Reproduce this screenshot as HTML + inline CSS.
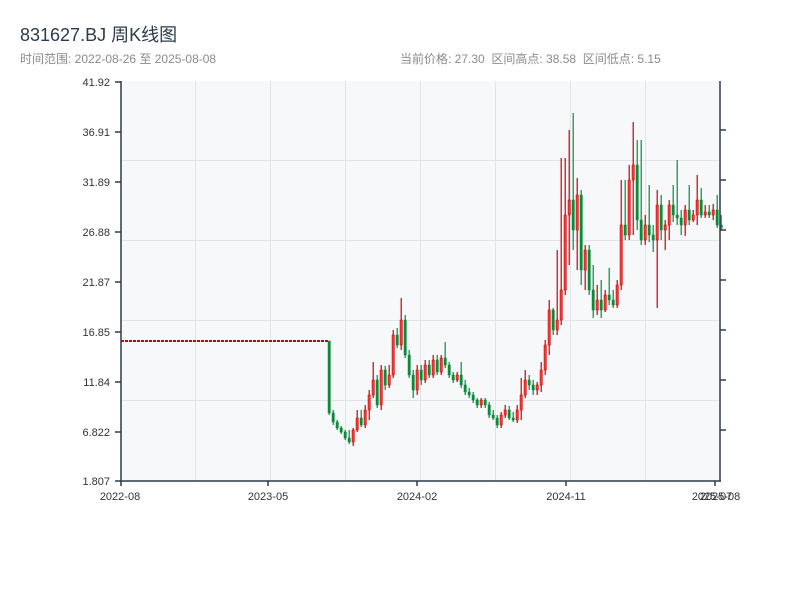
<!DOCTYPE html>
<html><head><meta charset="utf-8"><style>
body{margin:0;width:800px;height:600px;background:#fff;font-family:"Liberation Sans","Noto Sans CJK SC",sans-serif;overflow:hidden}
</style></head><body>
<svg width="800" height="600" xmlns="http://www.w3.org/2000/svg" font-family="Liberation Sans, Noto Sans CJK SC, sans-serif">
<text x="20" y="41" font-size="18" fill="#2c3a4b">831627.BJ 周K线图</text>
<text x="20" y="63" font-size="12" fill="#8a8a8a">时间范围: 2022-08-26 至 2025-08-08</text>
<text x="400" y="63" font-size="12" fill="#8a8a8a">当前价格: 27.30 &#160;区间高点: 38.58 &#160;区间低点: 5.15</text>
<rect x="121" y="81" width="599" height="400" fill="#f7f8fa"/>
<g stroke="#e1e3e8" stroke-width="1">
<line x1="195.5" y1="81" x2="195.5" y2="481"/><line x1="270.5" y1="81" x2="270.5" y2="481"/><line x1="345.5" y1="81" x2="345.5" y2="481"/><line x1="420.5" y1="81" x2="420.5" y2="481"/><line x1="495.5" y1="81" x2="495.5" y2="481"/><line x1="570.5" y1="81" x2="570.5" y2="481"/><line x1="645.5" y1="81" x2="645.5" y2="481"/>
<line x1="121" y1="160.5" x2="720" y2="160.5"/><line x1="121" y1="240.5" x2="720" y2="240.5"/><line x1="121" y1="320.5" x2="720" y2="320.5"/><line x1="121" y1="400.5" x2="720" y2="400.5"/>
</g>
<line x1="121" y1="341" x2="328" y2="341" stroke="#c00" stroke-width="2" stroke-dasharray="3,1"/>
<g id="c"></g>
<g stroke="#2c3a4b" stroke-width="1.5">
<line x1="121" y1="81" x2="121" y2="481"/><line x1="121" y1="481" x2="721" y2="481"/><line x1="720" y1="81" x2="720" y2="481"/>
<line x1="115" y1="82" x2="121" y2="82"/><line x1="115" y1="132" x2="121" y2="132"/><line x1="115" y1="182" x2="121" y2="182"/><line x1="115" y1="232" x2="121" y2="232"/><line x1="115" y1="282" x2="121" y2="282"/><line x1="115" y1="332" x2="121" y2="332"/><line x1="115" y1="382" x2="121" y2="382"/><line x1="115" y1="432" x2="121" y2="432"/><line x1="115" y1="481" x2="121" y2="481"/>
<line x1="720" y1="130" x2="726" y2="130"/><line x1="720" y1="180" x2="726" y2="180"/><line x1="720" y1="230" x2="726" y2="230"/><line x1="720" y1="280" x2="726" y2="280"/><line x1="720" y1="330" x2="726" y2="330"/><line x1="720" y1="380" x2="726" y2="380"/><line x1="720" y1="430" x2="726" y2="430"/>
<line x1="121" y1="481" x2="121" y2="486"/><line x1="268" y1="481" x2="268" y2="486"/><line x1="417" y1="481" x2="417" y2="486"/><line x1="566" y1="481" x2="566" y2="486"/><line x1="715" y1="481" x2="715" y2="486"/>
</g>
<g font-size="11" fill="#333" text-anchor="end">
<text x="110" y="86">41.92</text><text x="110" y="136">36.91</text><text x="110" y="186">31.89</text><text x="110" y="236">26.88</text><text x="110" y="286">21.87</text><text x="110" y="336">16.85</text><text x="110" y="386">11.84</text><text x="110" y="436">6.822</text><text x="110" y="485">1.807</text>
</g>
<g font-size="11" fill="#333" text-anchor="middle">
<text x="120" y="500">2022-08</text><text x="268" y="500">2023-05</text><text x="417" y="500">2024-02</text><text x="566" y="500">2024-11</text><text x="712" y="500">2025-07</text><text x="720" y="500">2025-08</text>
</g>
</svg>
<script>
var d=[[328,341,413,341,415],[332,413,422,410,425],[336,422,428,420,430],[340,428,432,426,434],[344,432,438,430,440],[348,438,442,430,444],[352,442,430,428,446],[356,430,418,410,432],[360,418,425,410,427],[364,425,410,405,428],[368,410,395,390,420],[372,395,380,362,398],[376,380,405,375,408],[380,405,370,365,410],[384,370,385,366,390],[388,385,375,365,388],[392,375,335,330,378],[396,335,345,328,348],[400,345,320,298,350],[404,320,355,315,358],[408,355,375,350,378],[412,375,390,370,398],[416,390,370,365,395],[420,370,380,365,385],[424,380,365,360,383],[428,365,375,360,378],[432,375,360,355,378],[436,360,372,355,375],[440,372,358,355,375],[444,358,365,342,368],[448,365,375,362,378],[452,375,380,372,383],[456,380,375,372,382],[460,375,385,362,388],[464,385,392,380,395],[468,392,395,388,398],[472,395,400,392,403],[476,400,405,398,408],[480,405,400,398,408],[484,400,405,398,408],[488,405,415,402,418],[492,415,418,410,420],[496,418,425,415,428],[500,425,415,412,428],[504,415,410,405,418],[508,410,418,406,420],[512,418,420,412,422],[516,420,410,405,423],[520,410,395,378,420],[524,395,380,370,398],[528,380,385,375,390],[532,385,390,380,395],[536,390,385,382,395],[540,385,370,362,392],[544,370,345,340,375],[548,345,310,300,355],[552,310,330,308,335],[556,330,320,250,335],[560,320,290,158,325],[564,290,215,158,295],[568,215,200,130,265],[572,200,230,113,250],[576,230,195,178,270],[580,195,270,190,285],[584,270,250,245,290],[588,250,290,245,295],[592,290,310,265,318],[596,310,300,285,315],[600,300,310,280,318],[604,310,295,290,312],[608,295,300,268,305],[612,300,305,290,308],[616,305,285,280,308],[620,285,225,180,290],[624,225,235,180,240],[628,235,180,165,240],[632,180,165,122,235],[636,165,220,140,230],[640,220,240,140,245],[644,240,225,215,245],[648,225,235,185,242],[652,235,240,225,252],[656,240,205,190,308],[660,205,230,195,240],[664,230,225,220,250],[668,225,205,200,240],[672,205,215,185,222],[676,215,218,160,225],[680,218,225,210,235],[684,225,210,205,236],[688,210,220,185,225],[692,220,215,210,222],[696,215,200,175,225],[700,200,215,188,218],[704,215,212,205,218],[708,212,215,205,218],[712,215,210,204,220],[716,210,225,195,228],[720,225,228,215,230]];
var s='';d.forEach(function(c){var up=c[2]<c[1];var col=up?'#cc0000':'#0a8a3a';var fill=up?'#e83a3a':'#0a8a3a';var t=Math.min(c[1],c[2]),b=Math.max(c[1],c[2]);if(b-t<2)b=t+2;
s+='<line x1="'+(c[0]+1.2)+'" y1="'+c[3]+'" x2="'+(c[0]+1.2)+'" y2="'+c[4]+'" stroke="'+col+'" stroke-width="1.2"/>';
s+='<rect x="'+c[0]+'" y="'+t+'" width="2.4" height="'+(b-t)+'" fill="'+fill+'" stroke="'+col+'" stroke-width="0.5"/>';});
document.getElementById('c').innerHTML=s;
</script>
</body></html>
